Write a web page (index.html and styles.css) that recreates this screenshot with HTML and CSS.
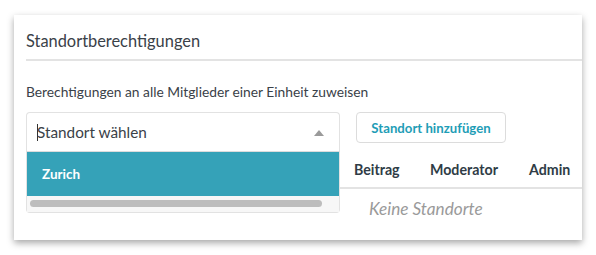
FILE: index.html
```html
<!DOCTYPE html>
<html lang="de">
<head>
<meta charset="utf-8">
<title>Standortberechtigungen</title>
<link rel="stylesheet" href="styles.css">
</head>
<body>
<section class="card">
  <h2 class="card-title">Standortberechtigungen</h2>
  <div class="card-body">
    <p class="hint">Berechtigungen an alle Mitglieder einer Einheit zuweisen</p>
    <div class="controls">
      <div class="select">
        <div class="select-input">
          <span class="cursor"></span><span class="placeholder">Standort wählen</span>
          <span class="caret"></span>
        </div>
        <div class="menu">
          <div class="option active">Zurich</div>
          <div class="scroll"><div class="thumb"></div></div>
        </div>
      </div>
      <button class="btn">Standort hinzufügen</button>
    </div>
    <div class="table">
      <div class="thead">
        <div class="th th-name"></div>
        <div class="th">Beitrag</div>
        <div class="th">Moderator</div>
        <div class="th">Admin</div>
      </div>
      <div class="empty">Keine Standorte</div>
    </div>
  </div>
</section>
</body>
</html>
```
FILE: styles.css
```css
* { box-sizing: border-box; }
html, body { margin: 0; padding: 0; background: #fff; }
body {
  font-family: "Lato", "Liberation Sans", sans-serif;
  color: #333c44;
  width: 596px;
  height: 255px;
  overflow: hidden;
  padding: 15px 14px 0 14px;
}
.card {
  background: #fff;
  height: 225px;
  box-shadow: 0 3px 7px rgba(0, 0, 0, 0.35);
}
.card-title {
  margin: 0 0 0 12px;
  padding: 16px 0 0 0;
  height: 46px;
  border-bottom: 2px solid #e3e3e3;
  font-size: 16.4px;
  font-weight: 400;
  color: #3a4148;
  line-height: 20px;
}
.card-body {
  padding: 0 0 0 12px;
}
.hint {
  margin: 0;
  padding-top: 23px;
  font-size: 13.8px;
  line-height: 16px;
  color: #3a4148;
}
.controls {
  display: flex;
  align-items: flex-start;
  gap: 16px;
  margin-top: 12px;
}
.select {
  position: relative;
  width: 314px;
}
.select-input {
  height: 39px;
  border: 1px solid #e2e2e2;
  border-bottom: none;
  border-radius: 4px 4px 0 0;
  display: flex;
  align-items: center;
  padding-left: 10px;
  position: relative;
}
.cursor {
  width: 1px;
  height: 17px;
  background: #333;
}
.placeholder {
  font-size: 15.3px;
  color: #3a4148;
  margin-left: -1px;
}
.caret {
  position: absolute;
  right: 15px;
  top: 17px;
  width: 0;
  height: 0;
  border-left: 5px solid transparent;
  border-right: 5px solid transparent;
  border-bottom: 6px solid #9a9a9a;
}
.menu {
  position: absolute;
  left: 0;
  right: 0;
  top: 39px;
  background: #fff;
  border: 1px solid #e2e2e2;
  border-top: 1px solid #dcdcdc;
  border-radius: 0 0 4px 4px;
  z-index: 2;
}
.option {
  height: 44px;
  display: flex;
  align-items: center;
  padding-left: 15px;
  font-size: 13.5px;
  font-weight: 700;
}
.option.active {
  background: #35a2b8;
  color: #fff;
}
.scroll {
  height: 16px;
  background: #f7f7f7;
  padding: 4px 17px 0 3px;
}
.thumb {
  height: 7px;
  border-radius: 4px;
  background: #bdbdbd;
}
.btn {
  height: 31px;
  width: 150px;
  border: 1px solid #dcdcdc;
  border-radius: 4px;
  background: #fff;
  color: #1e9db6;
  font-family: inherit;
  font-size: 13.2px;
  font-weight: 700;
  padding: 0;
}
.table {
  margin-top: 0;
}
.thead {
  display: grid;
  grid-template-columns: 1fr 76px 99px 53px;
  height: 38px;
  border-bottom: 2px solid #e3e3e3;
  align-items: center;
}
.th {
  font-size: 14.2px;
  font-weight: 700;
  color: #2f3c46;
}
.empty {
  padding: 10px 0 0 343px;
  font-size: 17.2px;
  line-height: 20px;
  font-style: italic;
  color: #9a9a9a;
}
```
